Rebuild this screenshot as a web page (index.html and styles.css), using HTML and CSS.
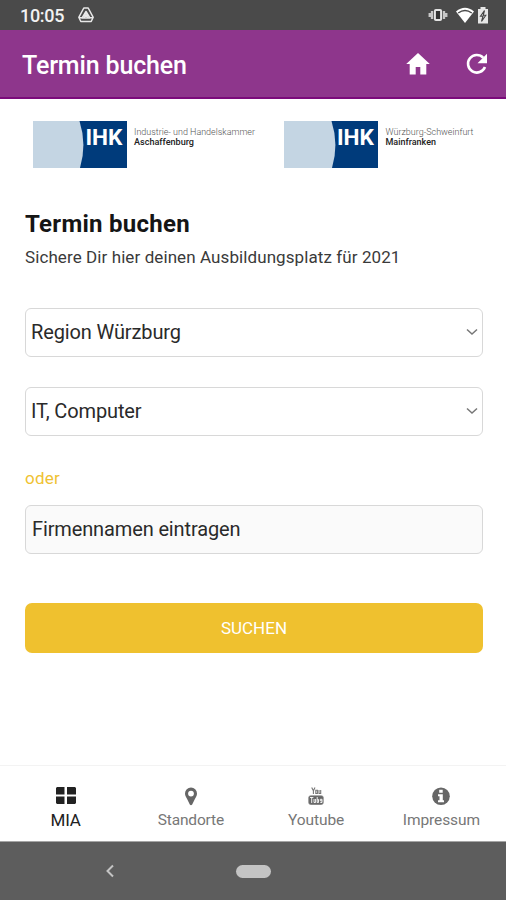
FILE: index.html
```html
<!DOCTYPE html>
<html lang="de">
<head>
<meta charset="utf-8">
<title>Termin buchen</title>
<link rel="stylesheet" href="styles.css">
</head>
<body>
<div class="status">
  <span class="time">10:05</span>
  <svg class="status-app" width="16" height="16" viewBox="0 0 16 16" fill="none" stroke="#e8e8e8" stroke-width="1.5" stroke-linejoin="round"><path d="M5.800 1h4.400l5 9.300-2 4.200H2.800L.8 10.300zM8 4.500 4.100 11h7.800zM8 7.400 6.200 10.800M8 7.400l1.800 3.400M1.200 10.800h3M11.800 10.800h3"/></svg>
  <svg class="vibrate" width="20" height="14" viewBox="0 0 20 14"><path d="M1.700 5v4M4 3v8M16 3v8M18.300 5v4" stroke="#c8c8c8" stroke-width="2.300"/><rect x="6.900" y="1.900" width="6.200" height="10.200" rx="1" fill="#333" stroke="#e4e4e4" stroke-width="2"/></svg>
  <svg class="wifi" width="20" height="17" viewBox="0 0 20 17"><path d="M1 4.500Q10-3 19 4.500L10 16z" fill="#fff"/><path d="M3.200 6Q10 .8 16.800 6" fill="none" stroke="#4a4a4a" stroke-width="1.500"/></svg>
  <svg class="battery" width="12" height="17" viewBox="0 0 12 17"><path d="M3.500 0h5v2H11v14.500H1V2h2.500z" fill="#e6e6e6"/><path d="M7.500 3.500 3.500 9.200H6L4.500 14.500 8.800 8.200H6.300z" fill="#eee" stroke="#444" stroke-width="1.100"/></svg>
</div>
<header class="header">
  <span class="header-title">Termin buchen</span>
  <svg class="home" width="24" height="22" viewBox="0 0 24 22"><path d="M12 0 .2 11h3.500v10.500h6V14h4.600v7.500h6V11h3.500z" fill="#fff"/></svg>
  <svg class="reload" width="22" height="22" viewBox="0 0 22 22"><path d="M19 14A8.800 8.800 0 1 1 17.300 4.800" fill="none" stroke="#fff" stroke-width="2.600"/><path d="M21 .7v9.500h-9.500z" fill="#fff"/></svg>
</header>
<main class="main">
  <div class="logos">
    <div class="logo">
      <svg width="94" height="47" viewBox="0 0 94 47"><path fill="#003b7b" d="M0 0h94v47H0z"/><path fill="#c4d5e3" d="M0 0h46.500Q54 23.500 47 47H0z"/><text class="ihk" x="52.500" y="24" textLength="37" lengthAdjust="spacingAndGlyphs">IHK</text></svg>
      <svg class="caption" width="124" height="47" viewBox="0 0 124 47"><text class="light" x="-1" y="13.500" textLength="121" lengthAdjust="spacingAndGlyphs">Industrie- und Handelskammer</text><text class="strong" x="-1" y="23.500" textLength="60" lengthAdjust="spacingAndGlyphs">Aschaffenburg</text></svg>
    </div>
    <div class="logo">
      <svg width="94" height="47" viewBox="0 0 94 47"><path fill="#003b7b" d="M0 0h94v47H0z"/><path fill="#c4d5e3" d="M0 0h47.500Q55 23.500 48 47H0z"/><text class="ihk" x="53" y="24" textLength="37" lengthAdjust="spacingAndGlyphs">IHK</text></svg>
      <svg class="caption" width="92" height="47" viewBox="0 0 92 47"><text class="light" x="0.500" y="13.500" textLength="88" lengthAdjust="spacingAndGlyphs">Würzburg-Schweinfurt</text><text class="strong" x="0.500" y="23.500" textLength="50.500" lengthAdjust="spacingAndGlyphs">Mainfranken</text></svg>
    </div>
  </div>
  <h1 class="title">Termin buchen</h1>
  <p class="sub">Sichere Dir hier deinen Ausbildungsplatz für 2021</p>
  <div class="field region"><span>Region Würzburg</span><svg width="12" height="8" viewBox="0 0 12 8"><path d="m1 1.500 5 4.500 5-4.500" fill="none" stroke="#777" stroke-width="1.500"/></svg></div>
  <div class="field branch"><span>IT, Computer</span><svg width="12" height="8" viewBox="0 0 12 8"><path d="m1 1.500 5 4.500 5-4.500" fill="none" stroke="#777" stroke-width="1.500"/></svg></div>
  <p class="or">oder</p>
  <div class="field company"><span>Firmennamen eintragen</span></div>
  <div class="button"><span>SUCHEN</span></div>
</main>
<nav class="tabs">
  <div class="tab active"><svg width="22" height="20" viewBox="0 0 22 20"><path d="M2 1h7.500v7.500H1V2zM12 1h8l1 1v6.500h-9zM1 10.500h8.500V18H2L1 17zM12 10.500h9V17l-1 1h-8z" fill="#222"/></svg><span class="mia">MIA</span></div>
  <div class="tab"><svg width="22" height="20" viewBox="0 0 22 20"><path fill-rule="evenodd" d="M11 1.500a6 6 0 0 0-6 6c0 2.200 1 3.200 2 5.300l2.800 5.800q1.200 1.200 2.400 0L15 12.800c1-2.100 2-3.100 2-5.300a6 6 0 0 0-6-6m0 3.200a2.900 2.900 0 1 1 0 5.800 2.900 2.900 0 0 1 0-5.800" fill="#666"/></svg><span class="standorte">Standorte</span></div>
  <div class="tab"><svg width="22" height="20" viewBox="0 0 22 20" fill="none" stroke="#777"><path d="m6.700 1.500 1.700 3.300 1.600-3.300M8.400 4.800V8M10.800 4.200h1.600v3.300h-1.600zM14 4v3.500h1.700V4" stroke-width="1.100"/><rect x="3.900" y="9.900" width="14.200" height="8.400" rx="1.500" fill="#666" stroke-width="1"/><path d="M5 11.500h3.400M6.700 11.500v5.500M9 13v3.500h1.600V13M12.200 11v5.500h1.300v-3h-1M17 14.800h-1.700v-1.500H17v3.200h-1.700" stroke="#fff" stroke-width=".9"/></svg><span class="youtube">Youtube</span></div>
  <div class="tab"><svg width="22" height="20" viewBox="0 0 22 20"><circle cx="11" cy="10.300" r="8.800" fill="#666"/><path d="M9.200 3.800h3.500v3H9.200zM8 8.300h4.800v6H14v2H8v-2h1.500v-4H8z" fill="#fff"/></svg><span class="impressum">Impressum</span></div>
</nav>
<footer class="system">
  <svg class="back" width="10" height="14" viewBox="0 0 10 14"><path d="M8 1.500 2.500 7 8 12.500" fill="none" stroke="#c4c4c4" stroke-width="2"/></svg>
  <div class="pill"></div>
</footer>
</body>
</html>
```

FILE: styles.css
```css
* { box-sizing: border-box; }
body { margin: 0; width: 506px; height: 900px; display: flex; flex-direction: column; overflow: hidden; background: #fff; font-family: Roboto, sans-serif; color: #2a2a2a; }
svg { display: block; flex: none; }
span, h1, p { white-space: nowrap; }
.status { height: 30px; flex: none; background: #4a4a4a; display: flex; align-items: center; padding: 0 17px 0 20px; color: #f2f2f2; }
.time { font-size: 18px; font-weight: 500; line-height: 30px; padding-top: 2px; width: 58px; letter-spacing: -.3px; }
.vibrate { margin-left: auto; margin-right: 7px; }
.wifi { margin-right: 2px; }
.header { height: 69px; flex: none; background: #8e368c; border-bottom: 2px solid #7b0b7b; display: flex; align-items: center; padding: 0 18px 0 22px; color: #fff; }
.header-title { font-size: 25px; font-weight: 500; line-height: 30px; padding-top: 5px; letter-spacing: -.15px; }
.home { margin-left: auto; margin-right: 36px; }
.main { flex: 1; padding: 22px 23px 0 25px; display: flex; flex-direction: column; }
.logos { display: flex; gap: 25px; padding-left: 8px; height: 47px; }
.logo { display: flex; gap: 7.500px; flex: none; }
.caption { overflow: visible; }
.ihk { font: 700 22px Roboto, sans-serif; fill: #fff; }
.light { font: 300 9px Roboto, sans-serif; fill: #555; }
.strong { font: 500 9px Roboto, sans-serif; fill: #222; }
.title { margin: 40px 0 0; font-size: 24px; line-height: 32px; font-weight: 700; color: #151515; letter-spacing: .28px; }
.sub { margin: 5px 0 0; font-size: 17px; line-height: 24px; color: #3a3a3a; letter-spacing: .09px; }
.field { height: 49px; flex: none; border: 1.500px solid #d8d8d8; border-radius: 6px; padding: 0 4px 2px 5px; display: flex; align-items: center; justify-content: space-between; font-size: 20px; letter-spacing: -.13px; }
.region { margin-top: 39px; }
.branch { margin-top: 30px; }
.or { margin: 30px 0 0; font-size: 17px; line-height: 24px; color: #efc234; letter-spacing: .2px; }
.company { margin-top: 15px; background: #fafafa; padding-left: 6px; }
.button { margin-top: 49px; height: 50px; flex: none; border-radius: 7px; background: #efc12f; color: #fff; display: flex; align-items: center; justify-content: center; font-size: 17px; }
.tabs { height: 76px; flex: none; border-top: 1px solid #f3f3f3; display: flex; padding: 20px 2px 0 3px; }
.tab { flex: 1; display: flex; flex-direction: column; align-items: center; font-size: 15.500px; line-height: 20px; color: #777; gap: 4px; letter-spacing: -.15px; }
.youtube, .impressum { letter-spacing: -.1px; }
.active { color: #222; }
.mia { font-size: 17px; }
.system { height: 59px; flex: none; background: #5d5d5d; border-top: 1px solid #a5a5a5; display: flex; align-items: center; padding-left: 105px; }
.pill { width: 35px; height: 13px; border-radius: 7px; background: #c4c4c4; margin-left: 121px; }
```
